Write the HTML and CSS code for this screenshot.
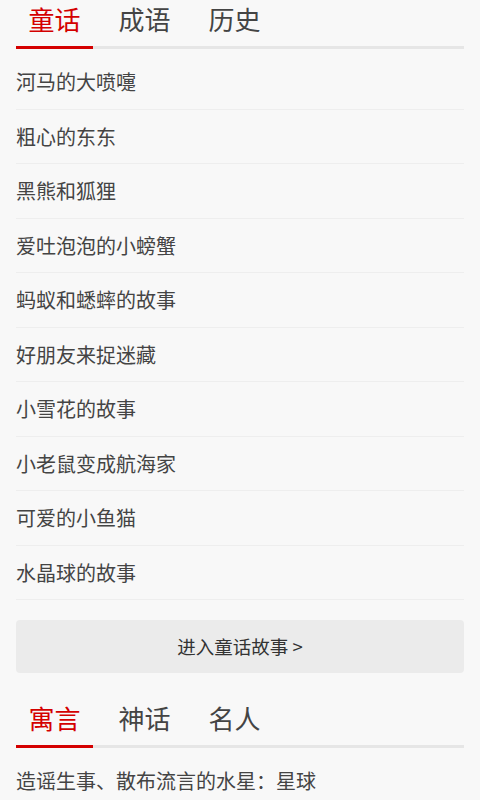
FILE: index.html
```html
<!DOCTYPE html>
<html lang="zh-CN">
<head>
<meta charset="utf-8">
<title>故事</title>
<link rel="stylesheet" href="styles.css">
</head>
<body>
<section class="section">
  <nav class="tabs">
    <span class="tab active">童话</span>
    <span class="tab">成语</span>
    <span class="tab">历史</span>
  </nav>
  <ul class="list">
    <li class="item">河马的大喷嚏</li>
    <li class="item">粗心的东东</li>
    <li class="item">黑熊和狐狸</li>
    <li class="item">爱吐泡泡的小螃蟹</li>
    <li class="item">蚂蚁和蟋蟀的故事</li>
    <li class="item">好朋友来捉迷藏</li>
    <li class="item">小雪花的故事</li>
    <li class="item">小老鼠变成航海家</li>
    <li class="item">可爱的小鱼猫</li>
    <li class="item">水晶球的故事</li>
  </ul>
  <div class="more">进入童话故事 &gt;</div>
</section>
<section class="section second">
  <nav class="tabs">
    <span class="tab active">寓言</span>
    <span class="tab">神话</span>
    <span class="tab">名人</span>
  </nav>
  <ul class="list">
    <li class="item">造谣生事、散布流言的水星：星球</li>
  </ul>
</section>
</body>
</html>
```

FILE: styles.css
```css
html, body {
  margin: 0;
  padding: 0;
  background: #f8f8f8;
}
body {
  font-family: "Noto Sans CJK SC", "Noto Sans", Roboto, sans-serif;
  color: #444;
  padding: 0 16px;
}
.section {
  display: block;
}
.second {
  margin-top: 26px;
}
.tabs {
  display: flex;
  gap: 13px;
  border-bottom: 3px solid #e6e6e6;
  height: 46px;
}
.tab {
  width: 77px;
  text-align: center;
  font-size: 26px;
  line-height: 38px;
  height: 46px;
  box-sizing: border-box;
  color: #444;
}
.tab.active {
  color: #d40000;
  border-bottom: 3px solid #d40000;
  height: 49px;
}
.list {
  list-style: none;
  margin: 6px 0 0;
  padding: 0;
}
.item {
  height: 53.5px;
  line-height: 53.5px;
  font-size: 20px;
  border-bottom: 1px solid #eeeeee;
  white-space: nowrap;
}
.second .item {
  border-bottom: none;
}
.more {
  margin-top: 20px;
  height: 52.5px;
  line-height: 52.5px;
  background: #ebebeb;
  border-radius: 4px;
  text-align: center;
  font-size: 18.5px;
  color: #333;
}
```
